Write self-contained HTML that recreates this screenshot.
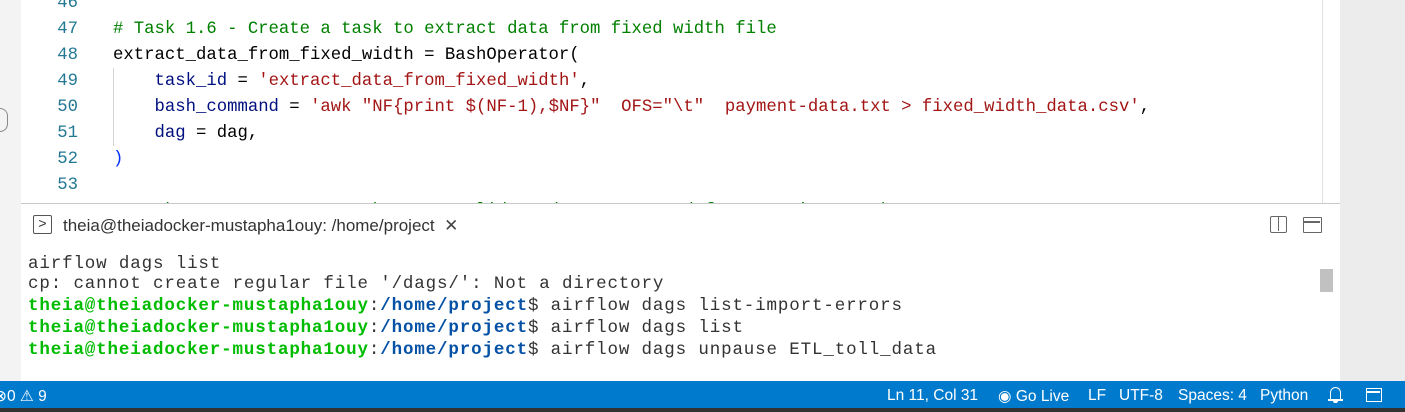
<!DOCTYPE html>
<html><head><meta charset="utf-8"><style>
*{margin:0;padding:0;box-sizing:border-box}
body{width:1405px;height:412px;overflow:hidden;background:#fff;position:relative;font-family:"Liberation Sans",sans-serif}
.abs{position:absolute}
.code{font-family:"Liberation Mono",monospace;font-size:17.3px;white-space:pre;line-height:26px}
.ln{position:absolute;left:30px;width:48px;text-align:right;color:#237893}
.tx{position:absolute;left:113px}
.c{color:#008000}.s{color:#a31515}.v{color:#001080}.p{color:#0431fa}
.term{font-family:"Liberation Mono",monospace;font-size:17.5px;letter-spacing:0.86px;white-space:pre;position:absolute;left:28px;line-height:22px;color:#333}
.g{color:#00bc00;font-weight:bold}.b{color:#0451a5;font-weight:bold}
.sb{position:absolute;top:381px;left:0;width:1405px;height:27px;background:#007acc;color:#fff;font-size:15.5px}
.sb span{position:absolute;top:6px}
</style></head><body>
<div class="abs" style="left:0;top:0;width:21px;height:381px;background:#f3f3f3"></div>
<div class="abs" style="left:1340px;top:0;width:65px;height:381px;background:#ececec"></div>
<div class="abs" style="left:1322px;top:0;width:1px;height:203px;background:#e0e0e0"></div>
<div class="abs" style="left:0;top:108px;width:8px;height:24px;border:1.5px solid #888;border-left:none;border-radius:0 12px 12px 0"></div>
<div class="abs" style="left:21px;top:0;width:1301px;height:203px;overflow:hidden">
<div class="code" style="position:relative;left:-21px;top:-9px">
<div class="ln" style="top:0">46</div>
<div class="ln" style="top:26px">47</div><div class="tx c" style="top:26px"># Task 1.6 - Create a task to extract data from fixed width file</div>
<div class="ln" style="top:52px">48</div><div class="tx" style="top:52px">extract_data_from_fixed_width = BashOperator(</div>
<div class="ln" style="top:78px">49</div><div class="tx" style="top:78px">    <span class="v">task_id</span> = <span class="s">'extract_data_from_fixed_width'</span>,</div>
<div class="ln" style="top:104px">50</div><div class="tx" style="top:104px">    <span class="v">bash_command</span> = <span class="s">'awk "NF{print $(NF-1),$NF}"  OFS="\t"  payment-data.txt &gt; fixed_width_data.csv'</span>,</div>
<div class="ln" style="top:130px">51</div><div class="tx" style="top:130px">    <span class="v">dag</span> = dag,</div>
<div class="ln" style="top:156px">52</div><div class="tx p" style="top:156px">)</div>
<div class="ln" style="top:182px">53</div>
<div class="ln" style="top:208px">54</div><div class="tx c" style="top:208px"># Task 1.7 - Create a task to consolidate data extracted from previous tasks</div>
</div>
<div class="abs" style="left:92px;top:68px;width:1px;height:78px;background:#d3d3d3"></div>
</div>
<div class="abs" style="left:21px;top:203px;width:1319px;height:1px;background:#c8c8c8"></div>
<div class="abs" style="left:33px;top:215px;width:19px;height:19px;border:1.5px solid #555;border-radius:2px;font-size:14px;line-height:15px;text-align:center;color:#333">&gt;</div>
<div class="abs" style="left:63px;top:216px;font-size:17px;color:#333">theia@theiadocker-mustapha1ouy: /home/project&nbsp;&nbsp;<span style="font-weight:300;color:#444">✕</span></div>
<div class="abs" style="left:1270px;top:216px;width:17px;height:17px;border:1.5px solid #666;border-radius:2px"><div style="position:absolute;left:6.5px;top:0;width:1.5px;height:14px;background:#666"></div></div>
<div class="abs" style="left:1303px;top:217px;width:19px;height:16px;border:1.5px solid #666;border-radius:1px"><div style="position:absolute;left:0;top:3px;width:16px;height:1.5px;background:#666"></div></div>
<div class="abs" style="left:1320px;top:269px;width:13px;height:23px;background:#c1c1c1"></div>
<div class="term" style="top:253px">airflow dags list</div>
<div class="term" style="top:273px">cp: cannot create regular file '/dags/': Not a directory</div>
<div class="term" style="top:295px"><span class="g">theia@theiadocker-mustapha1ouy</span>:<span class="b">/home/project</span>$ airflow dags list-import-errors</div>
<div class="term" style="top:317px"><span class="g">theia@theiadocker-mustapha1ouy</span>:<span class="b">/home/project</span>$ airflow dags list</div>
<div class="term" style="top:339px"><span class="g">theia@theiadocker-mustapha1ouy</span>:<span class="b">/home/project</span>$ airflow dags unpause ETL_toll_data</div>
<div class="sb">
<span style="left:-6px">⊗0 ⚠ 9</span>
<span style="left:887px">Ln 11, Col 31</span>
<span style="left:998px">◉ Go Live</span>
<span style="left:1088px">LF</span>
<span style="left:1119px">UTF-8</span>
<span style="left:1178px">Spaces: 4</span>
<span style="left:1260px">Python</span>
<div style="position:absolute;left:1330px;top:6px;width:11px;height:12px;border:1.5px solid #fff;border-bottom:none;border-radius:6px 6px 0 0"></div>
<div style="position:absolute;left:1328px;top:18px;width:15px;height:1.5px;background:#fff"></div>
<div style="position:absolute;left:1333px;top:20px;width:5px;height:2px;background:#fff;border-radius:0 0 3px 3px"></div>
<div style="position:absolute;left:1366px;top:7px;width:16px;height:14px;border:1.5px solid #fff"><div style="position:absolute;left:0;top:2px;width:13px;height:1.5px;background:#fff"></div></div>
</div>
<div class="abs" style="left:0;top:408px;width:1405px;height:4px;background:#333"></div>
</body></html>
